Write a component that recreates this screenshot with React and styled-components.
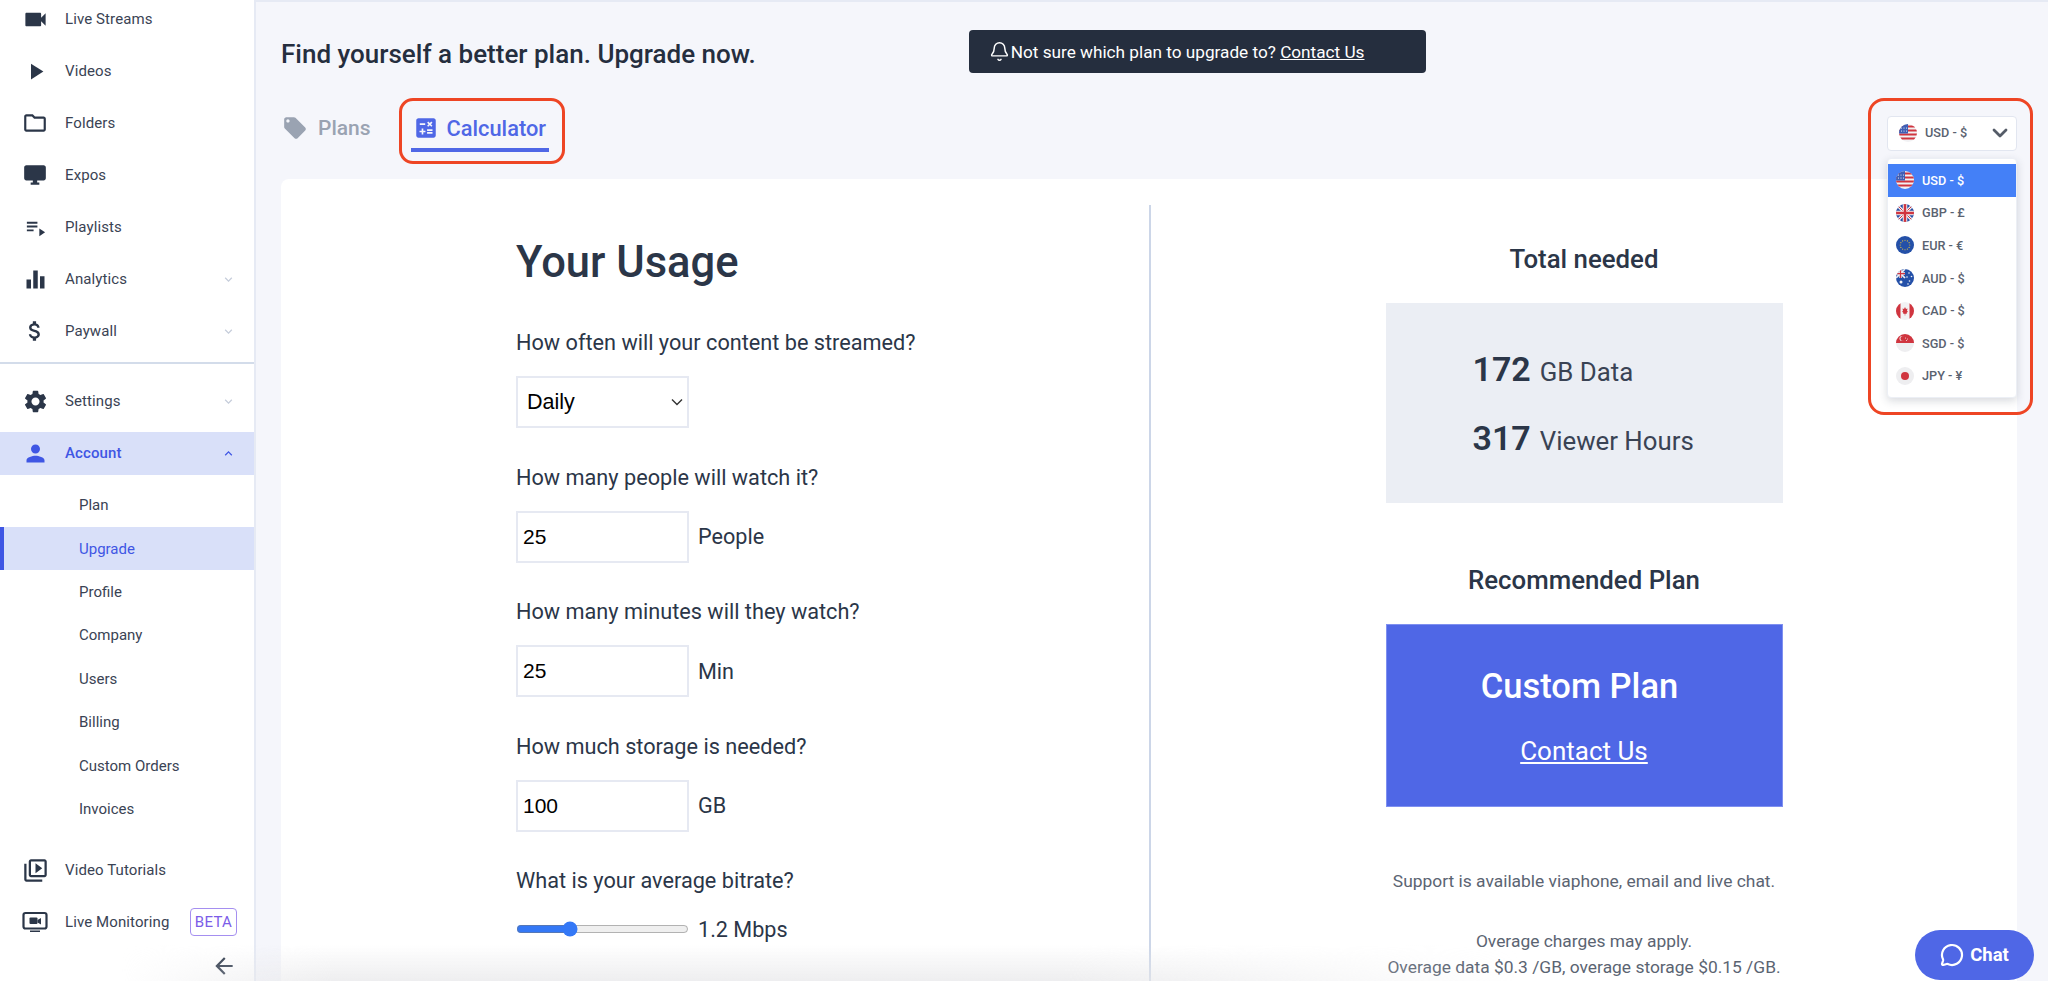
import React from 'react'
import styled, { createGlobalStyle } from 'styled-components'
import {
  MdVideocam, MdPlayArrow, MdOutlineFolder, MdDesktopWindows, MdPlaylistPlay, MdEqualizer,
  MdAttachMoney, MdSettings, MdPerson, MdOutlineVideoLibrary, MdExpandMore, MdExpandLess,
  MdArrowBack, MdLocalOffer, MdCalculate,
} from 'react-icons/md'
import { Bell, ChevronDown, MessageCircle } from 'lucide-react'

const GlobalStyle = createGlobalStyle`
  html, body { margin: 0; padding: 0; height: 100%; overflow: hidden; }
  body { font-family: Roboto, "Liberation Sans", sans-serif; color: #2b3648; background: #f5f6fb; }
  * { box-sizing: border-box; }
`

const Page = styled.div`
  display: flex;
  height: 981px;
  overflow: hidden;
  position: relative;
`

const Sidebar = styled.aside`
  flex: 0 0 256px;
  background: #fff;
  border-right: 2px solid #e6eaf4;
  overflow: hidden;
`
const NavList = styled.nav`
  margin-top: -2.5px;
`
const NavItem = styled.div`
  display: flex;
  align-items: center;
  height: 43px;
  margin-bottom: 9px;
  padding-right: 19px;
  font-size: 15px;
  letter-spacing: 0.1px;
  color: ${(p) => (p.$active ? '#3f56e4' : '#3a4354')};
  font-weight: ${(p) => (p.$active ? 500 : 400)};
  background: ${(p) => (p.$active ? '#d9e0f9' : 'transparent')};
`
const NavIcon = styled.span`
  flex: 0 0 70px;
  display: flex;
  justify-content: center;
  color: ${(p) => (p.$active ? '#3f56e4' : '#2b3648')};
  svg { display: block; }
`
const NavLabel = styled.span`
  flex: 1;
  margin-left: -5px;
`
const Chevron = styled.span`
  display: flex;
  margin-right: -1px;
  color: ${(p) => (p.$active ? '#3f56e4' : '#c6cddb')};
`
const Divider = styled.div`
  height: 2px;
  background: #d3dcea;
  margin-bottom: 16px;
`
const SubItem = styled.div`
  display: flex;
  align-items: center;
  height: 43.4px;
  padding-left: ${(p) => (p.$active ? '75px' : '79px')};
  font-size: 15px;
  color: ${(p) => (p.$active ? '#3f56e4' : '#3a4354')};
  background: ${(p) => (p.$active ? '#d9e0f9' : 'transparent')};
  border-left: ${(p) => (p.$active ? '4px solid #3f56e4' : 'none')};
`
const FooterNav = styled.div`
  margin-top: 18px;
`
const Beta = styled.span`
  display: flex;
  align-items: center;
  justify-content: center;
  width: 47px;
  height: 28px;
  margin-right: -2px;
  border: 1px solid #a58ff0;
  border-radius: 4px;
  color: #7c5ce8;
  font-size: 15px;
  letter-spacing: 0.3px;
`
const Collapse = styled.div`
  display: flex;
  justify-content: flex-end;
  margin-top: 1px;
  padding-right: 17px;
  color: #2b3648;
`

const Main = styled.main`
  flex: 1;
  min-width: 0;
  border-top: 2px solid #e6eaf4;
  padding: 28px 31px 0 25px;
`
const Header = styled.header`
  display: flex;
  align-items: center;
  height: 43px;
`
const Title = styled.h1`
  flex: 0 0 474px;
  margin: 0;
  padding-top: 5px;
  font-size: 26px;
  font-weight: 500;
  white-space: nowrap;
  color: #252e3e;
`
const Banner = styled.div`
  display: flex;
  align-items: center;
  gap: 1px;
  width: 457px;
  height: 43px;
  margin-left: 213px;
  padding-left: 20px;
  background: #252e3e;
  border-radius: 4px;
  color: #fff;
  font-size: 17.2px;
  white-space: nowrap;
  a { color: #fff; text-decoration: underline; }
`
const TabRow = styled.div`
  display: flex;
  justify-content: space-between;
  align-items: flex-start;
  margin-top: 35px;
  margin-bottom: 27px;
`
const Tabs = styled.div`
  display: flex;
  padding-left: 1px;
  gap: 40px;
`
const Tab = styled.div`
  position: relative;
  display: flex;
  align-items: center;
  gap: ${(p) => (p.$active ? '8px' : '10px')};
  height: 44px;
  padding: 4px ${(p) => (p.$active ? '3px' : '0')} 4px ${(p) => (p.$active ? '2px' : '0')};
  font-size: ${(p) => (p.$active ? '21.8px' : '21px')};
  font-weight: 500;
  color: ${(p) => (p.$active ? '#4f67e6' : '#9aa3b2')};
  border-bottom: 4px solid ${(p) => (p.$active ? '#4f67e6' : 'transparent')};
`
const TabHighlight = styled.span`
  position: absolute;
  top: -10px;
  left: -12px;
  right: -16px;
  bottom: -16px;
  border: 3px solid #ee4524;
  border-radius: 14px;
  pointer-events: none;
`

const Currency = styled.div`
  position: relative;
  width: 130px;
  margin-top: 8px;
  z-index: 3;
`
const CurrencyBox = styled.div`
  display: flex;
  align-items: center;
  height: 35px;
  padding: 0 4px 2px 11px;
  background: #fff;
  border: 1px solid #e2e6f0;
  border-radius: 4px;
  font-size: 12.7px;
  font-weight: 500;
  color: #5a6270;
`
const Caret = styled.span`
  display: flex;
  margin-left: auto;
  color: #555c68;
`
const CurrencyLabel = styled.span`
  margin-left: 8px;
`
const CurrencyMenu = styled.div`
  position: absolute;
  top: 42px;
  left: 0;
  width: 130px;
  padding: 5px 0;
  background: #fff;
  border: 1px solid #eceff5;
  border-radius: 4px;
  box-shadow: 0 3px 8px rgba(40, 50, 70, 0.18);
`
const CurrencyOption = styled.div`
  display: flex;
  align-items: center;
  height: 32.6px;
  padding-left: 8px;
  font-size: 12.7px;
  font-weight: 500;
  color: ${(p) => (p.$active ? '#fff' : '#5a6270')};
  background: ${(p) => (p.$active ? '#4480f7' : 'transparent')};
`
const CurrencyHighlight = styled.span`
  position: absolute;
  top: -18px;
  left: -19px;
  right: -16px;
  height: 317px;
  border: 3px solid #ee4524;
  border-radius: 16px;
  pointer-events: none;
`

const Card = styled.section`
  display: grid;
  grid-template-columns: 870px 1fr;
  height: 820px;
  padding-top: 26px;
  background: #fff;
  border-radius: 8px 8px 0 0;
`
const UsageColumn = styled.div`
  padding: 33px 0 0 235px;
  border-right: 2px solid #ccd6e8;
`
const UsageTitle = styled.h2`
  margin: 0 0 43px;
  font-size: 43.5px;
  line-height: 50px;
  font-weight: 500;
  color: #2b3648;
`
const Field = styled.div`
  margin-bottom: 37.6px;
`
const FieldLabel = styled.div`
  margin-bottom: 21px;
  font-size: 21.7px;
  line-height: 24px;
  color: #2b3648;
`
const FieldRow = styled.div`
  display: flex;
  align-items: center;
  gap: 9px;
  height: ${(p) => (p.$slim ? '30px' : '52px')};
  font-size: 21.6px;
  color: #2b3648;
`
const NumberInput = styled.input`
  width: 173px;
  height: 52px;
  padding: 0 5px;
  border: 2px solid #e6e9f2;
  background: #fff;
  color: #000;
  font: 21px "Liberation Sans", Arial, sans-serif;
  outline: none;
`
const SelectInput = styled.select`
  width: 173px;
  height: 52px;
  padding: 0 9px;
  appearance: none;
  border: 2px solid #e6e9f2;
  border-radius: 0;
  background: #fff url("data:image/svg+xml,%3Csvg xmlns='http://www.w3.org/2000/svg' width='12' height='8'%3E%3Cpath d='M1 1.5l5 5 5-5' fill='none' stroke='%23333' stroke-width='1.4'/%3E%3C/svg%3E") no-repeat right 4px center;
  color: #000;
  font: 21.5px "Liberation Sans", Arial, sans-serif;
`
const RangeInput = styled.input`
  width: 173px;
  margin: 0;
  accent-color: #3478f6;
`

const SummaryColumn = styled.div`
  display: flex;
  flex-direction: column;
  align-items: center;
  padding-top: 39px;
`
const SummaryTitle = styled.h3`
  margin: ${(p) => (p.$spaced ? '62px' : '0')} 0 29px;
  font-size: 25.8px;
  line-height: 30px;
  font-weight: 500;
  color: #2b3648;
`
const StatBox = styled.div`
  display: flex;
  flex-direction: column;
  justify-content: center;
  gap: 29px;
  width: 397px;
  height: 200px;
  padding-left: 87px;
  background: #ebeef4;
`
const StatRow = styled.div`
  display: flex;
  align-items: baseline;
  gap: 9px;
  height: 40px;
  font-size: 25.8px;
  line-height: 40px;
  color: #3a4354;
  b { font-size: 34px; font-weight: 600; color: #2b3648; }
`
const PlanBox = styled.div`
  display: flex;
  flex-direction: column;
  align-items: center;
  justify-content: center;
  gap: 30px;
  width: 397px;
  height: 183px;
  background: #4f67e6;
  border: 1px solid #7f90f0;
  color: #fff;
  strong { font-size: 34.5px; line-height: 40px; font-weight: 500; margin-left: -9px; }
  a { color: #fff; font-size: 26px; line-height: 30px; text-decoration: underline; }
`
const Note = styled.p`
  margin: ${(p) => (p.$first ? '61px' : '34px')} 0 0;
  font-size: 17.4px;
  line-height: 26px;
  text-align: center;
  color: #5b6472;
`

const BottomFade = styled.div`
  position: absolute;
  left: 0;
  bottom: 0;
  width: 1520px;
  height: 36px;
  background: linear-gradient(to bottom, rgba(232, 232, 234, 0), rgba(232, 232, 234, 0.75));
  mask-image: linear-gradient(to right, transparent 8%, #000 22%, #000 70%, transparent);
  pointer-events: none;
`
const ChatButton = styled.button`
  position: absolute;
  right: 14px;
  bottom: 1px;
  display: flex;
  align-items: center;
  justify-content: center;
  gap: 6px;
  width: 119px;
  height: 50px;
  border: none;
  border-radius: 25px;
  background: #4f67e6;
  color: #fff;
  font: 700 18.5px Roboto, sans-serif;
`

const FlagCircle = styled.svg`
  flex: 0 0 ${(p) => p.$size}px;
  display: block;
`

// flag drawings, all in a 36 box clipped to a circle
const flagArt = {
  USD: (
    <>
      <rect width="36" height="36" fill="#f2f2f4" />
      {[3, 11, 19, 27].map((y) => <rect key={y} y={y} width="36" height="4" fill="#d0353f" />)}
      <rect width="18" height="19" fill="#3f5fb5" />
      {[5, 10, 15].map((x) => <circle key={x} cx={x} cy="8" r="1.1" fill="#fff" />)}
      {[5, 10, 15].map((x) => <circle key={x} cx={x} cy="14" r="1.1" fill="#fff" />)}
    </>
  ),
  GBP: (
    <>
      <rect width="36" height="36" fill="#2d4fa3" />
      <path d="M0 0L36 36M36 0L0 36" stroke="#f2f2f4" strokeWidth="6" />
      <path d="M0 0L36 36M36 0L0 36" stroke="#d0353f" strokeWidth="2" />
      <path d="M18 0V36M0 18H36" stroke="#f2f2f4" strokeWidth="9" />
      <path d="M18 0V36M0 18H36" stroke="#d0353f" strokeWidth="5" />
    </>
  ),
  EUR: (
    <>
      <rect width="36" height="36" fill="#2450a8" />
      {Array.from({ length: 12 }, (_, i) => (
        <circle
          key={i}
          cx={18 + 9.5 * Math.cos((i * Math.PI) / 6)}
          cy={18 + 9.5 * Math.sin((i * Math.PI) / 6)}
          r="1.2"
          fill="#e8c33c"
        />
      ))}
    </>
  ),
  AUD: (
    <>
      <rect width="36" height="36" fill="#2450a8" />
      <path d="M0 0L18 18M18 0L0 18" stroke="#f2f2f4" strokeWidth="3.5" />
      <path d="M9 0V18M0 9H18" stroke="#f2f2f4" strokeWidth="5" />
      <path d="M9 0V18M0 9H18" stroke="#d0353f" strokeWidth="2.5" />
      <circle cx="10" cy="26" r="3" fill="#f2f2f4" />
      {[[26, 8], [31, 15], [22, 16], [27, 24], [24, 30]].map(([x, y]) => (
        <circle key={x + y} cx={x} cy={y} r="1.6" fill="#f2f2f4" />
      ))}
    </>
  ),
  CAD: (
    <>
      <rect width="36" height="36" fill="#f2f2f4" />
      <rect width="9" height="36" fill="#d0353f" />
      <rect x="27" width="9" height="36" fill="#d0353f" />
      <path d="M18 10l2 4 3-1-1 5 2 1-3 3 .5 2-3-.5V27h-1v-3.5l-3 .5.5-2-3-3 2-1-1-5 3 1z" fill="#d0353f" />
    </>
  ),
  SGD: (
    <>
      <rect width="36" height="36" fill="#eeeef0" />
      <rect width="36" height="18" fill="#d0353f" />
      <circle cx="12" cy="9" r="5" fill="#f2f2f4" />
      <circle cx="14" cy="9" r="5" fill="#d0353f" />
      <circle cx="19" cy="8" r="1" fill="#f2f2f4" />
      <circle cx="23" cy="10" r="1" fill="#f2f2f4" />
      <circle cx="21" cy="13" r="1" fill="#f2f2f4" />
    </>
  ),
  JPY: (
    <>
      <rect width="36" height="36" fill="#eeeef0" />
      <circle cx="18" cy="18" r="8" fill="#d0353f" />
    </>
  ),
}

const Flag = ({ code, size = 18, idPrefix = 'f' }) => (
  <FlagCircle $size={size} width={size} height={size} viewBox="0 0 36 36">
    <clipPath id={`${idPrefix}-${code}`}><circle cx="18" cy="18" r="18" /></clipPath>
    <g clipPath={`url(#${idPrefix}-${code})`}>{flagArt[code]}</g>
  </FlagCircle>
)

const MonitorIcon = () => (
  <svg width="26" height="26" viewBox="0 0 26 26" fill="none">
    <rect x="1.5" y="4" width="23" height="15.5" rx="2" stroke="currentColor" strokeWidth="2.2" />
    <path d="M8 21.5h10v1.5H8z" fill="currentColor" />
    <rect x="7.5" y="8.5" width="8" height="6.5" rx="1" fill="currentColor" />
    <path d="M15.5 11l3.5-2v6.5l-3.5-2z" fill="currentColor" />
  </svg>
)

const topNav = [
  { label: 'Live Streams', icon: <MdVideocam size={27} /> },
  { label: 'Videos', icon: <MdPlayArrow size={27} /> },
  { label: 'Folders', icon: <MdOutlineFolder size={26} /> },
  { label: 'Expos', icon: <MdDesktopWindows size={26} /> },
  { label: 'Playlists', icon: <MdPlaylistPlay size={23} /> },
  { label: 'Analytics', icon: <MdEqualizer size={27} />, more: true },
  { label: 'Paywall', icon: <MdAttachMoney size={26} />, more: true },
]
const subNav = ['Plan', 'Upgrade', 'Profile', 'Company', 'Users', 'Billing', 'Custom Orders', 'Invoices']
const currencies = [
  ['USD', 'USD - $'],
  ['GBP', 'GBP - £'],
  ['EUR', 'EUR - €'],
  ['AUD', 'AUD - $'],
  ['CAD', 'CAD - $'],
  ['SGD', 'SGD - $'],
  ['JPY', 'JPY - ¥'],
]
const fields = [
  { q: 'How many people will watch it?', value: '25', unit: 'People' },
  { q: 'How many minutes will they watch?', value: '25', unit: 'Min' },
  { q: 'How much storage is needed?', value: '100', unit: 'GB' },
]

export default function App() {
  return (
    <Page>
      <GlobalStyle />
      <Sidebar>
        <NavList>
          {topNav.map((item) => (
            <NavItem key={item.label}>
              <NavIcon>{item.icon}</NavIcon>
              <NavLabel>{item.label}</NavLabel>
              {item.more && <Chevron><MdExpandMore size={15} /></Chevron>}
            </NavItem>
          ))}
          <Divider />
          <NavItem>
            <NavIcon><MdSettings size={27} /></NavIcon>
            <NavLabel>Settings</NavLabel>
            <Chevron><MdExpandMore size={15} /></Chevron>
          </NavItem>
          <NavItem $active>
            <NavIcon $active><MdPerson size={27} /></NavIcon>
            <NavLabel>Account</NavLabel>
            <Chevron $active><MdExpandLess size={15} /></Chevron>
          </NavItem>
          <div>
            {subNav.map((name) => (
              <SubItem key={name} $active={name === 'Upgrade'}>{name}</SubItem>
            ))}
          </div>
          <FooterNav>
            <NavItem>
              <NavIcon><MdOutlineVideoLibrary size={27} /></NavIcon>
              <NavLabel>Video Tutorials</NavLabel>
            </NavItem>
            <NavItem>
              <NavIcon><MonitorIcon /></NavIcon>
              <NavLabel>Live Monitoring</NavLabel>
              <Beta>BETA</Beta>
            </NavItem>
          </FooterNav>
          <Collapse><MdArrowBack size={26} /></Collapse>
        </NavList>
      </Sidebar>

      <Main>
        <Header>
          <Title>Find yourself a better plan. Upgrade now.</Title>
          <Banner>
            <Bell size={21} strokeWidth={1.7} />
            <span>Not sure which plan to upgrade to? <a href="#contact">Contact Us</a></span>
          </Banner>
        </Header>

        <TabRow>
          <Tabs>
            <Tab>
              <MdLocalOffer size={26} />
              Plans
            </Tab>
            <Tab $active>
              <MdCalculate size={26} />
              Calculator
              <TabHighlight />
            </Tab>
          </Tabs>
          <Currency>
            <CurrencyBox>
              <Flag code="USD" idPrefix="box" />
              <CurrencyLabel>USD - $</CurrencyLabel>
              <Caret><ChevronDown size={24} strokeWidth={2.8} /></Caret>
            </CurrencyBox>
            <CurrencyMenu>
              {currencies.map(([code, label]) => (
                <CurrencyOption key={code} $active={code === 'USD'}>
                  <Flag code={code} idPrefix="menu" />
                  <CurrencyLabel>{label}</CurrencyLabel>
                </CurrencyOption>
              ))}
            </CurrencyMenu>
            <CurrencyHighlight />
          </Currency>
        </TabRow>

        <Card>
          <UsageColumn>
            <UsageTitle>Your Usage</UsageTitle>
            <Field>
              <FieldLabel>How often will your content be streamed?</FieldLabel>
              <FieldRow>
                <SelectInput defaultValue="Daily">
                  <option>Daily</option>
                  <option>Weekly</option>
                  <option>Monthly</option>
                </SelectInput>
              </FieldRow>
            </Field>
            {fields.map((f) => (
              <Field key={f.q}>
                <FieldLabel>{f.q}</FieldLabel>
                <FieldRow>
                  <NumberInput defaultValue={f.value} />
                  {f.unit}
                </FieldRow>
              </Field>
            ))}
            <Field>
              <FieldLabel>What is your average bitrate?</FieldLabel>
              <FieldRow $slim>
                <RangeInput type="range" min="0" max="100" defaultValue="29" />
                1.2 Mbps
              </FieldRow>
            </Field>
          </UsageColumn>

          <SummaryColumn>
            <SummaryTitle>Total needed</SummaryTitle>
            <StatBox>
              <StatRow><b>172</b> GB Data</StatRow>
              <StatRow><b>317</b> Viewer Hours</StatRow>
            </StatBox>
            <SummaryTitle $spaced>Recommended Plan</SummaryTitle>
            <PlanBox>
              <strong>Custom Plan</strong>
              <a href="#contact">Contact Us</a>
            </PlanBox>
            <Note $first>Support is available viaphone, email and live chat.</Note>
            <Note>
              Overage charges may apply.
              <br />
              Overage data $0.3 /GB, overage storage $0.15 /GB.
            </Note>
          </SummaryColumn>
        </Card>
      </Main>

      <BottomFade />
      <ChatButton>
        <MessageCircle size={24} strokeWidth={2.2} />
        Chat
      </ChatButton>
    </Page>
  )
}
